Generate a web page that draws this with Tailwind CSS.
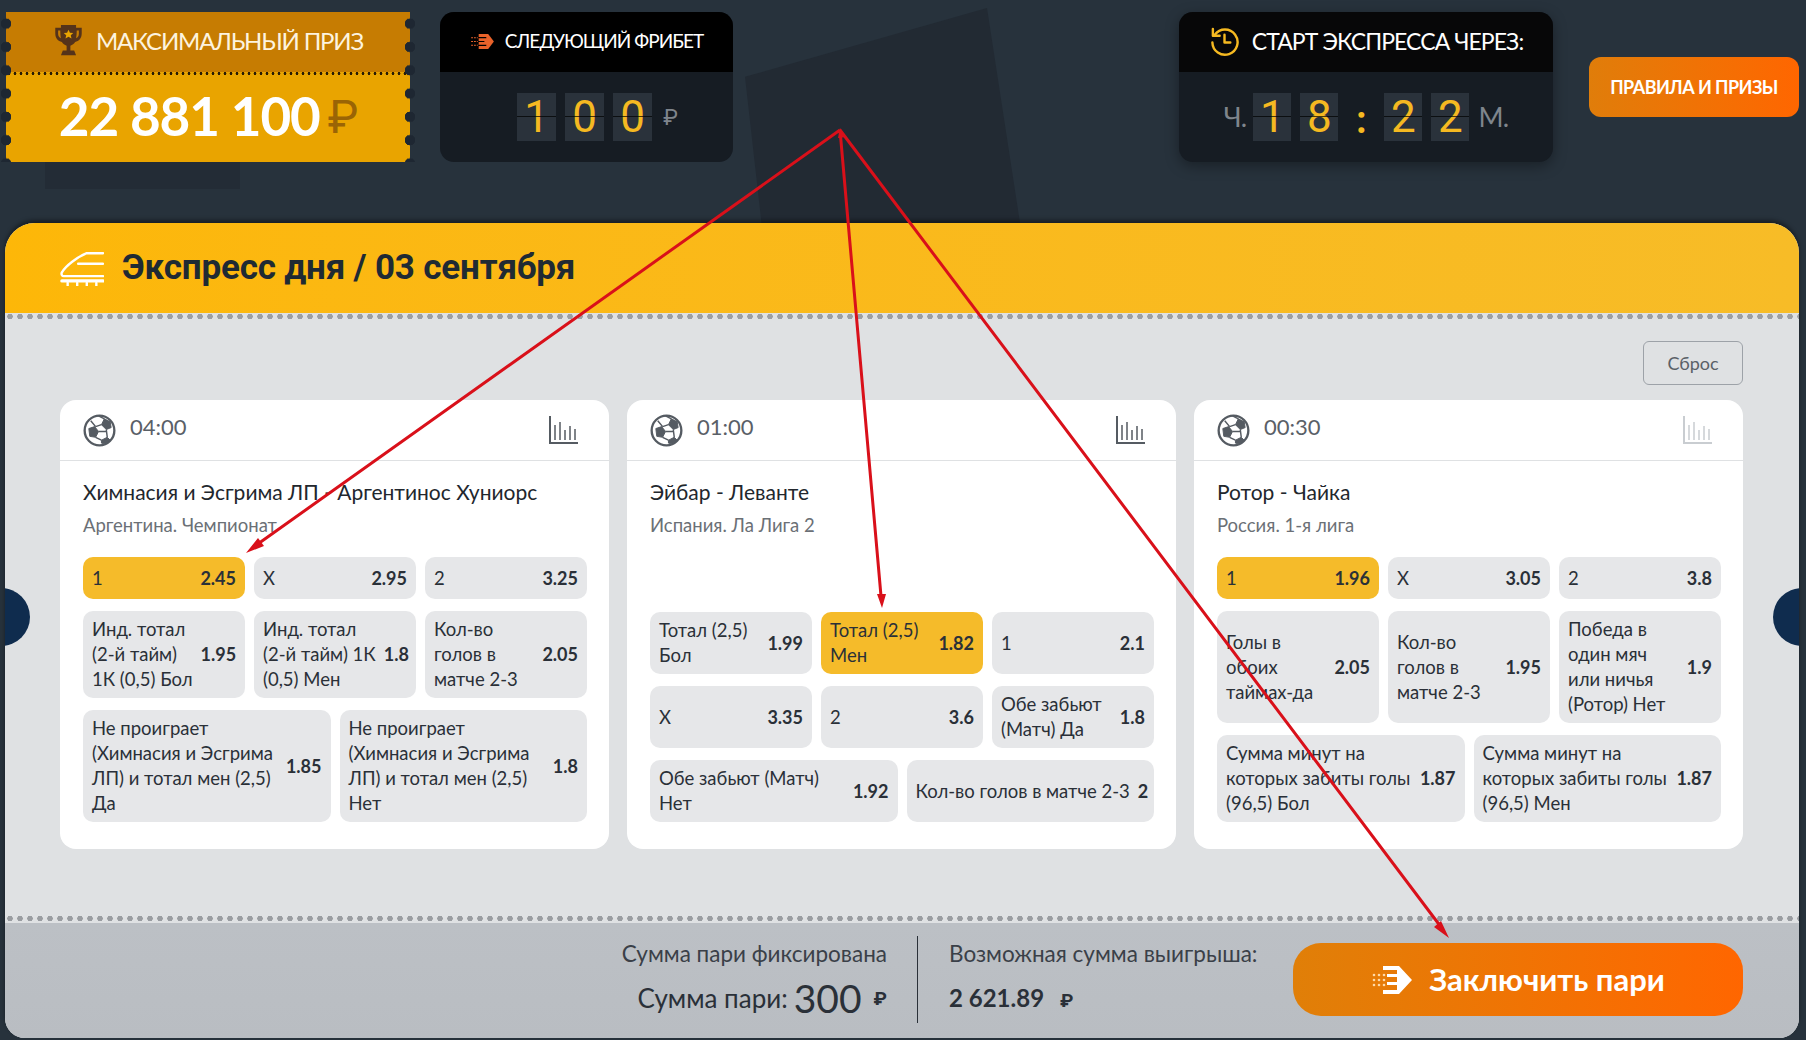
<!DOCTYPE html>
<html lang="ru">
<head>
  <meta charset="UTF-8">
  <title>Экспресс дня</title>
  <script src="https://cdn.jsdelivr.net/npm/@tailwindcss/browser@4"></script>
</head>
<body class="bg-[#27323c] font-['Lato','Roboto',sans-serif]">
<div class="relative w-[1806px] h-[1040px] overflow-hidden">
  <!-- background shapes -->
  <div class="absolute left-[745px] top-[8px] w-[275px] h-[215px] bg-[#222a33] [clip-path:polygon(0_32%,88%_0,100%_100%,6%_100%)]"></div>
  <div class="absolute left-[45px] top-[160px] w-[195px] h-[29px] bg-[#232c36]"></div>

  <!-- top row -->
  <div class="relative flex h-[223px] pl-[6px] pt-[12px]">
    <div class="relative w-[404px] h-[150px]">
      <div class="h-[60px] bg-[#c67c02] flex items-center justify-center gap-[12px] pb-[2px] text-[#fdf3df] text-[24px] tracking-[-0.05em]">
        <svg viewBox="0 0 32 36" class="w-[31px] h-[34px]"><path fill="#55331a" d="M8 1h16v3h6v6c0 5-3 8-7 9-1 2-3 3-5 4v5h4l2 5H8l2-5h4v-5c-2-1-4-2-5-4-4-1-7-4-7-9V4h6zM5 7v3c0 3 1 4 3 5-.5-2-.7-5-.7-8zm22 0h-2.300c0 3-.2 6-.7 8 2-1 3-2 3-5z"/><path fill="#e9a400" d="M16 6l1.500 3.200 3.500.4-2.600 2.300.8 3.500-3.200-1.800-3.200 1.800.8-3.500L11 9.600l3.500-.4z"/></svg>
        <span>МАКСИМАЛЬНЫЙ ПРИЗ</span>
      </div>
      <div class="h-[3px] bg-[#e9a400] bg-[radial-gradient(circle,#2a1c05_1.300px,transparent_1.600px)] bg-[length:6px_3px]"></div>
      <div class="h-[87px] bg-[#e9a400] flex items-center justify-center pb-[6px] text-white font-bold text-[53px] tracking-[-0.02em]">
        22 881 100<span class="ml-[8px] font-normal text-[#9a6405] text-[46px]">₽</span>
      </div>
      <div class="absolute -left-[5px] top-0 w-[10px] h-full bg-[radial-gradient(circle,#1e2732_5px,transparent_5.500px)] bg-[length:10px_23.300px]"></div>
      <div class="absolute -right-[5px] top-0 w-[10px] h-full bg-[radial-gradient(circle,#1e2732_5px,transparent_5.500px)] bg-[length:10px_23.300px]"></div>
    </div>

    <div class="ml-[30px] w-[293px] h-[150px] rounded-[14px] overflow-hidden bg-[#161c23]">
      <div class="h-[60px] bg-black flex items-center justify-center gap-[10px] pb-[2px] text-white text-[19px] tracking-[-0.05em]">
        <svg viewBox="0 0 26 20" class="w-[25px] h-[19px]"><path fill="#e8622a" d="M9 2h10l6 8-6 8H9z"/><path stroke="#e8622a" stroke-width="1.200" stroke-dasharray="2 1" d="M1 6h10M1 10h10M1 14h10"/><path stroke="#000" stroke-width="1.300" d="M8 6h9M8 10h7M8 14h9"/></svg>
        <span>СЛЕДУЮЩИЙ ФРИБЕТ</span>
      </div>
      <div class="h-[90px] flex items-center justify-center gap-[9px] pl-[22px] text-[#f5b921] text-[44px] font-['Roboto',sans-serif] font-normal">
        <div class="relative w-[39px] h-[48px] bg-[#2a323b] flex items-center justify-center">1<div class="absolute left-0 right-0 top-[23px] h-px bg-black/70"></div></div>
        <div class="relative w-[39px] h-[48px] bg-[#2a323b] flex items-center justify-center">0<div class="absolute left-0 right-0 top-[23px] h-px bg-black/70"></div></div>
        <div class="relative w-[39px] h-[48px] bg-[#2a323b] flex items-center justify-center">0<div class="absolute left-0 right-0 top-[23px] h-px bg-black/70"></div></div>
        <span class="ml-[2px] text-[#7f858c] text-[22px]">₽</span>
      </div>
    </div>

    <div class="ml-[446px] w-[374px] h-[150px] rounded-[14px] overflow-hidden bg-[#161c23] shadow-[0_4px_14px_rgba(0,0,0,0.35)]">
      <div class="h-[60px] bg-[#070708] flex items-center justify-center gap-[12px] pb-[2px] text-white text-[23px] tracking-[-0.04em]">
        <svg viewBox="0 0 32 32" class="w-[31px] h-[31px]" fill="none" stroke="#f5b921" stroke-width="2.500" stroke-linecap="round" stroke-linejoin="round"><path d="M6 9a13 13 0 1 1-2.500 8"/><path d="M4 3v7h7"/><path d="M16 9v8h6"/></svg>
        <span>СТАРТ ЭКСПРЕССА ЧЕРЕЗ:</span>
      </div>
      <div class="h-[90px] flex items-center justify-center text-[#f5b921] text-[44px] font-['Roboto',sans-serif] font-normal">
        <span class="mr-[7px] text-[#7f858c] text-[27px] tracking-[-0.03em] font-['Lato','Roboto',sans-serif]">Ч.</span>
        <div class="relative w-[38px] h-[48px] bg-[#2a323b] flex items-center justify-center">1<div class="absolute left-0 right-0 top-[23px] h-px bg-black/70"></div></div>
        <div class="relative ml-[9px] w-[38px] h-[48px] bg-[#2a323b] flex items-center justify-center">8<div class="absolute left-0 right-0 top-[23px] h-px bg-black/70"></div></div>
        <span class="w-[46px] text-center font-bold text-[38px] pt-[6px]">:</span>
        <div class="relative w-[38px] h-[48px] bg-[#2a323b] flex items-center justify-center">2<div class="absolute left-0 right-0 top-[23px] h-px bg-black/70"></div></div>
        <div class="relative ml-[9px] w-[38px] h-[48px] bg-[#2a323b] flex items-center justify-center">2<div class="absolute left-0 right-0 top-[23px] h-px bg-black/70"></div></div>
        <span class="ml-[9px] text-[#7f858c] text-[27px] tracking-[-0.03em] font-['Lato','Roboto',sans-serif]">М.</span>
      </div>
    </div>

    <div class="ml-[36px] mt-[45px] w-[210px] h-[60px] rounded-[12px] bg-linear-to-r from-[#e07d0a] to-[#ff6600] flex items-center justify-center text-white font-bold text-[18px] tracking-[-0.03em]">ПРАВИЛА И ПРИЗЫ</div>
  </div>

  <!-- main panel -->
  <div class="relative ml-[5px] w-[1794px] h-[815px] flex flex-col rounded-t-[30px] rounded-b-[20px] overflow-hidden bg-[#dfe1e3] shadow-[0_-3px_4px_rgba(0,0,0,0.4)]">
    <div class="h-[90px] shrink-0 bg-linear-to-r from-[#fdb708] to-[#f7bc27] flex items-center pl-[55px] gap-[18px] pt-[1px] text-[#1f2a33]">
      <svg viewBox="0 0 46 36" class="w-[44px] h-[35px]" fill="none" stroke="#fff" stroke-width="2.500" stroke-linecap="round" stroke-linejoin="round"><path d="M45 2H28C18 6 6 15 2 22c-1 2 0 4 2 4h41"/><path d="M45 13H19"/><path d="M2 31h43" stroke-width="3.500"/><path d="M8 33v3M18 33v3M28 33v3M38 33v3" stroke-width="2.500"/></svg>
      <span class="font-['Roboto',sans-serif] font-bold text-[35px] tracking-[-0.005em]">Экспресс дня / 03 сентября</span>
    </div>
    <div class="h-[7px] shrink-0 bg-[radial-gradient(circle,#9c9fa3_2.500px,transparent_3px)] bg-[length:10px_7px]"></div>

    <div class="flex-1 relative px-[55px] pt-[21px]">
      <div class="flex justify-end pr-px">
        <div class="w-[100px] h-[44px] rounded-[6px] border border-[#9da2a8] flex items-center justify-center text-[#5a6067] text-[18px]">Сброс</div>
      </div>
      <div id="cards" class="mt-[15px] grid grid-cols-3 gap-[18px] h-[449px] pr-px"></div>
      <div class="absolute left-[-33px] top-[268px] w-[58px] h-[58px] rounded-full bg-[#0f2c4e]"></div>
      <div class="absolute right-[-32px] top-[268px] w-[58px] h-[58px] rounded-full bg-[#0f2c4e]"></div>
    </div>

    <div class="h-[9px] shrink-0 bg-[radial-gradient(circle,#9a9da1_2.500px,transparent_3px)] bg-[length:10px_9px]"></div>
    <div class="h-[115px] shrink-0 bg-linear-to-b from-[#bcc0c5] to-[#b9bdc2] flex justify-end items-start pr-[56px] text-[#2a3038]">
      <div class="mt-[13px] h-[87px] pr-[30px] border-r border-[#2a3038] text-right">
        <div class="text-[22.500px] text-[#3a4048] leading-[30px] mt-[3px]">Сумма пари фиксирована</div>
        <div class="flex items-center justify-end gap-[6px] text-[26px] leading-[44px] mt-[7px]">Сумма пари: <span class="text-[39px] leading-[44px]">300</span><span class="ml-[6px] text-[19px] font-bold">₽</span></div>
      </div>
      <div class="mt-[13px] w-[375px] pl-[31px]">
        <div class="text-[22.500px] text-[#3a4048] leading-[30px] mt-[3px]">Возможная сумма выигрыша:</div>
        <div class="text-[24px] font-bold leading-[44px] mt-[7px]">2 621.89 <span class="ml-[10px] text-[19px]">₽</span></div>
      </div>
      <div class="mt-[20px] w-[450px] h-[73px] rounded-[28px] bg-linear-to-r from-[#e07f08] to-[#ff6600] flex items-center justify-center gap-[16px] text-white font-bold text-[31px]">
        <svg viewBox="0 0 42 32" class="w-[42px] h-[32px]"><path fill="#fff" d="M12 2h16l13 14-13 14H12v-4h14V21H16v-3h10v-5H16v-3h10V6H12z"/><g fill="#ffd9a6"><circle cx="3" cy="11" r="1.300"/><circle cx="8" cy="11" r="1.300"/><circle cx="13" cy="11" r="1.300"/><circle cx="3" cy="16" r="1.300"/><circle cx="8" cy="16" r="1.300"/><circle cx="13" cy="16" r="1.300"/><circle cx="3" cy="21" r="1.300"/><circle cx="8" cy="21" r="1.300"/><circle cx="13" cy="21" r="1.300"/></g></svg>
        <span>Заключить пари</span>
      </div>
    </div>
  </div>

  <!-- red annotation arrows -->
  <svg class="absolute left-0 top-0 pointer-events-none" width="1806" height="1040" fill="none" stroke="#d9101a" stroke-width="3">
    <path d="M840 130L255 546M840 130L881 596M840 130L1441 927"/>
    <path fill="#d9101a" stroke="none" d="M246 553l12-15 6 8zM882 608l-5-14 9 0zM1449 938l-15-11 7-6zM840 128l6 9-8 1z"/>
  </svg>
</div>

<script>
  const ball = `<svg viewBox="0 0 34 34" class="w-[33px] h-[33px]" fill="none" stroke="#555b62" stroke-width="2.400"><circle cx="17" cy="17" r="15.300"/><path fill="#555b62" stroke-width="1" d="M22 5l6 3 1 6-5 2-5-5zM6 15l6-2 4 5-3 6-6-1zM19 27l6-3 3 3-5 4-4-1z"/><path stroke-width="1.500" d="M19 11l-6 2M16 18h8M13 24l6 3M24 16l1 8M22 5l-6-3M8 7l5 6"/></svg>`
  const chart = (color) => `<svg viewBox="0 0 30 30" class="w-[30px] h-[30px]" fill="none" stroke="${color}" stroke-width="1.500"><path stroke-width="2" d="M1 1v27h28"/><path d="M6 10v15M11 7v18M16 15v10M21 11v14M26 14v11"/></svg>`

  const btn = (label, odd, active) => `<div class="flex items-center justify-between gap-[8px] min-h-[42px] rounded-[10px] px-[9px] py-[6px] text-[18.500px] leading-[25px] text-[#2a3038] ${active ? 'bg-[#f5bb2a]' : 'bg-[#e6e7e9]'}"><span class="whitespace-nowrap">${label}</span><span class="font-bold shrink-0 text-[18px]">${odd}</span></div>`
  const row = (cols, items) => `<div class="grid ${cols === 3 ? 'grid-cols-3' : 'grid-cols-2'} gap-[9px]">${items.map(i => btn(i[0], i[1], i[2])).join('')}</div>`

  const data = [
    { time: '04:00', chart: '#555b62', title: 'Химнасия и Эсгрима ЛП - Аргентинос Хуниорс', league: 'Аргентина. Чемпионат', rows: [
      [3, [['1', '2.45', true], ['X', '2.95'], ['2', '3.25']]],
      [3, [['Инд. тотал<br>(2-й тайм)<br>1К (0,5) Бол', '1.95'], ['Инд. тотал<br>(2-й тайм) 1К<br>(0,5) Мен', '1.8'], ['Кол-во<br>голов в<br>матче 2-3', '2.05']]],
      [2, [['Не проиграет<br>(Химнасия и Эсгрима<br>ЛП) и тотал мен (2,5)<br>Да', '1.85'], ['Не проиграет<br>(Химнасия и Эсгрима<br>ЛП) и тотал мен (2,5)<br>Нет', '1.8']]]
    ]},
    { time: '01:00', chart: '#555b62', title: 'Эйбар - Леванте', league: 'Испания. Ла Лига 2', rows: [
      [3, [['Тотал (2,5)<br>Бол', '1.99'], ['Тотал (2,5)<br>Мен', '1.82', true], ['1', '2.1']]],
      [3, [['X', '3.35'], ['2', '3.6'], ['Обе забьют<br>(Матч) Да', '1.8']]],
      [2, [['Обе забьют (Матч)<br>Нет', '1.92'], ['Кол-во голов в матче 2-3', '2']]]
    ]},
    { time: '00:30', chart: '#c9cdd1', title: 'Ротор - Чайка', league: 'Россия. 1-я лига', rows: [
      [3, [['1', '1.96', true], ['X', '3.05'], ['2', '3.8']]],
      [3, [['Голы в<br>обоих<br>таймах-да', '2.05'], ['Кол-во<br>голов в<br>матче 2-3', '1.95'], ['Победа в<br>один мяч<br>или ничья<br>(Ротор) Нет', '1.9']]],
      [2, [['Сумма минут на<br>которых забиты голы<br>(96,5) Бол', '1.87'], ['Сумма минут на<br>которых забиты голы<br>(96,5) Мен', '1.87']]]
    ]}
  ]

  document.getElementById('cards').innerHTML = data.map(c => `
    <div class="bg-white rounded-[16px] flex flex-col">
      <div class="h-[61px] shrink-0 border-b border-[#dfe1e3] flex items-center pl-[23px] pr-[30px]">
        ${ball}
        <span class="ml-[14px] mb-[8px] text-[22px] text-[#5a6067]">${c.time}</span>
        <span class="ml-auto">${chart(c.chart)}</span>
      </div>
      <div class="flex-1 flex flex-col pl-[23px] pr-[22px] pb-[27px]">
        <div class="mt-[17px] text-[21px] leading-[28px] text-[#22272d]">${c.title}</div>
        <div class="mt-[7px] text-[18.500px] leading-[25px] text-[#6b7076]">${c.league}</div>
        <div class="mt-auto flex flex-col gap-[12px]">${c.rows.map(r => row(r[0], r[1])).join('')}</div>
      </div>
    </div>`).join('')
</script>
</body>
</html>
